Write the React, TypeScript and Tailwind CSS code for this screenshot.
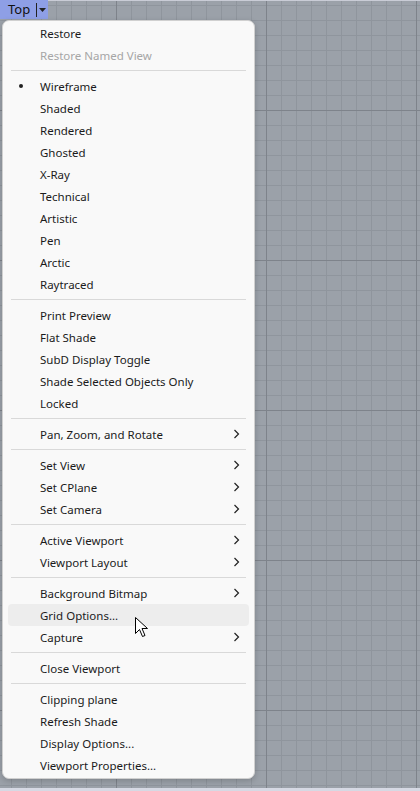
import React from "react";

type Item =
  | { type: "sep" }
  | { type: "item"; label: string; disabled?: boolean; bullet?: boolean; sub?: boolean; hover?: boolean };

const items: Item[] = [
  { type: "item", label: "Restore" },
  { type: "item", label: "Restore Named View", disabled: true },
  { type: "sep" },
  { type: "item", label: "Wireframe", bullet: true },
  { type: "item", label: "Shaded" },
  { type: "item", label: "Rendered" },
  { type: "item", label: "Ghosted" },
  { type: "item", label: "X-Ray" },
  { type: "item", label: "Technical" },
  { type: "item", label: "Artistic" },
  { type: "item", label: "Pen" },
  { type: "item", label: "Arctic" },
  { type: "item", label: "Raytraced" },
  { type: "sep" },
  { type: "item", label: "Print Preview" },
  { type: "item", label: "Flat Shade" },
  { type: "item", label: "SubD Display Toggle" },
  { type: "item", label: "Shade Selected Objects Only" },
  { type: "item", label: "Locked" },
  { type: "sep" },
  { type: "item", label: "Pan, Zoom, and Rotate", sub: true },
  { type: "sep" },
  { type: "item", label: "Set View", sub: true },
  { type: "item", label: "Set CPlane", sub: true },
  { type: "item", label: "Set Camera", sub: true },
  { type: "sep" },
  { type: "item", label: "Active Viewport", sub: true },
  { type: "item", label: "Viewport Layout", sub: true },
  { type: "sep" },
  { type: "item", label: "Background Bitmap", sub: true },
  { type: "item", label: "Grid Options...", hover: true },
  { type: "item", label: "Capture", sub: true },
  { type: "sep" },
  { type: "item", label: "Close Viewport" },
  { type: "sep" },
  { type: "item", label: "Clipping plane" },
  { type: "item", label: "Refresh Shade" },
  { type: "item", label: "Display Options..." },
  { type: "item", label: "Viewport Properties..." },
];

function Grid() {
  const minorV: number[] = [];
  for (let x = 11; x < 420; x += 15) minorV.push(x);
  const minorH: number[] = [];
  for (let y = 5; y < 791; y += 15) minorH.push(y);
  const majorV = [116, 266, 416];
  const majorH = [110, 260, 410, 560, 710];
  return (
    <svg className="absolute inset-0" width={420} height={791} viewBox="0 0 420 791">
      <rect x={0} y={0} width={420} height={791} fill="#9ba1a9" />
      {minorV.map((x) => (
        <rect key={"v" + x} x={x} y={0} width={1} height={791} fill="#8f959d" />
      ))}
      {minorH.map((y) => (
        <rect key={"h" + y} x={0} y={y} width={420} height={1} fill="#8f959d" />
      ))}
      {majorV.map((x) => (
        <rect key={"V" + x} x={x} y={0} width={1} height={791} fill="#7e838b" />
      ))}
      {majorH.map((y) => (
        <rect key={"H" + y} x={0} y={y} width={420} height={1} fill="#7e838b" />
      ))}
      <rect x={0} y={0} width={420} height={1} fill="#c9ccd6" />
      <rect x={0} y={788} width={420} height={3} fill="#d6d9e4" />
    </svg>
  );
}

function Chevron() {
  return (
    <svg width="7" height="10" viewBox="0 0 7 10" className="shrink-0">
      <path d="M1.5 1 L5.5 5 L1.5 9" fill="none" stroke="#222" strokeWidth="1.2" />
    </svg>
  );
}

function Cursor() {
  return (
    <svg width="14" height="22" viewBox="0 0 14 22" className="absolute left-[135px] top-[617px]">
      <path
        d="M0.5 0.5 L0.5 16.5 L4.5 12.5 L7.5 19.5 L10 18.5 L7 11.5 L12.5 11.5 Z"
        fill="#ffffff"
        stroke="#000000"
        strokeWidth="1"
      />
    </svg>
  );
}

function Row({ it }: { it: Extract<Item, { type: "item" }> }) {
  return (
    <div
      className={
        "mx-[5px] h-[22px] rounded-[4px] flex items-center pr-[9px] " +
        (it.hover ? "bg-[#ededed]" : "")
      }
    >
      <div className="w-[32px] flex justify-center shrink-0">
        {it.bullet && <div className="w-[4px] h-[4px] rounded-full bg-[#222] mr-[6px]" />}
      </div>
      <span
        className={
          "flex-1 pt-[2px] text-[11.5px] leading-[20px] whitespace-nowrap " +
          (it.disabled ? "text-[#a6a6a6]" : "text-[#1b1b1b]")
        }
      >
        {it.label}
      </span>
      {it.sub && <Chevron />}
    </div>
  );
}

export default function App() {
  return (
    <div
      className="relative w-[420px] h-[791px] overflow-hidden bg-[#9ba1a9]"
      style={{ fontFamily: '"Noto Sans", "Noto Sans CJK KR", sans-serif' }}
    >
      <Grid />
      <div className="absolute left-0 top-0 h-[19px] bg-[#8e9fe6] flex items-center">
        <span className="pl-[8px] pr-[6px] text-[13px] leading-none text-[#111]">Top</span>
        <div className="w-px h-[14px] bg-[#222]" />
        <svg width="7" height="4" viewBox="0 0 7 4" className="mx-[2px]">
          <path d="M0 0 L7 0 L3.5 4 Z" fill="#222" />
        </svg>
      </div>
      <div className="absolute left-[2px] top-[20px] w-[253px] rounded-[7px] bg-[#f9f9f9] border border-[#d0d0d0] shadow-[0_2px_6px_rgba(0,0,0,0.18)] pt-px pb-[2px] flex flex-col">
        {items.map((it, i) =>
          it.type === "sep" ? (
            <div key={i} className="py-[4px] px-[8px]">
              <div className="w-[235px] h-px bg-[#d9d9d9]" />
            </div>
          ) : (
            <Row key={i} it={it} />
          )
        )}
      </div>
      <Cursor />
    </div>
  );
}
